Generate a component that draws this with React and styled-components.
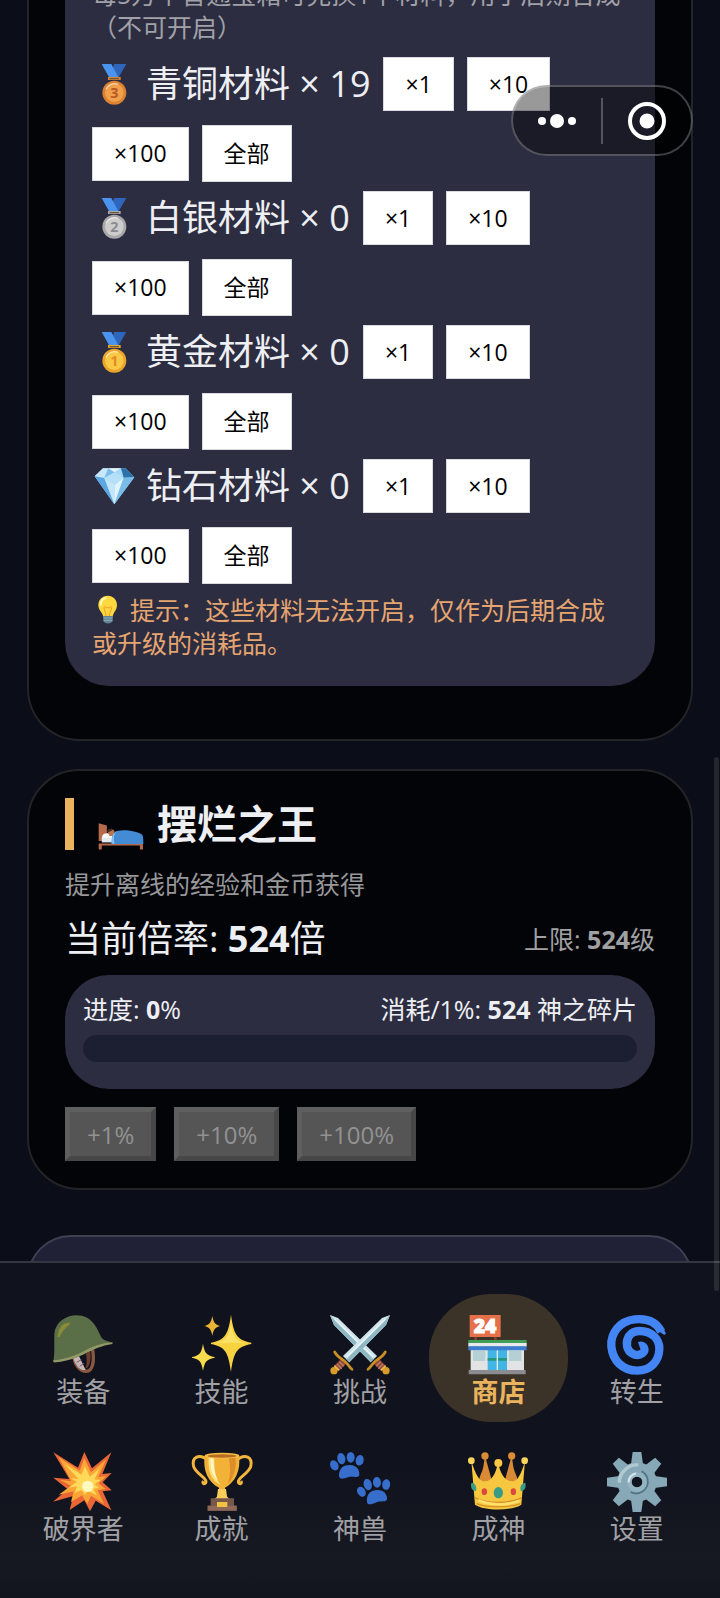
import styled, { createGlobalStyle, css } from "styled-components";

const GlobalStyle = createGlobalStyle`
  * {
    box-sizing: border-box;
  }
  body {
    margin: 0;
    background: #0b0d18;
    color: #eeeff3;
    font-family: "Open Sans", "Noto Sans CJK SC", sans-serif;
    text-spacing-trim: space-all;
  }
  button {
    font-family: inherit;
    cursor: pointer;
  }
`;

const Medal = ({ number, rim, face, ink }) => (
  <svg viewBox="0 0 135 135" aria-hidden="true">
    <path d="M66 6h37L80 46H56z" fill="#2f66bd" />
    <path d="M29 6h29l22 41H52z" fill="#4a93ee" />
    <path d="M48 45h38v9H48z" fill={rim} />
    <path d="M53 48h28v4H53z" fill="#6d5a3c" />
    <circle cx="67" cy="92" r="36" fill={rim} />
    <circle cx="67" cy="92" r="28" fill={face} />
    <path d="M42 82a28 28 0 0 1 36-15" fill="none" stroke="#fff" strokeOpacity=".6" strokeWidth="4" />
    <text x="67" y="107" fill={ink} fontSize="43" fontWeight="700" textAnchor="middle">
      {number}
    </text>
  </svg>
);

const Gem = () => (
  <svg viewBox="0 0 135 135" aria-hidden="true">
    <path d="M33 13h68l26 27-60 81L8 37z" fill="#9dd2f3" />
    <path d="M33 13 8 37l29 5 12-29z" fill="#c7e7fa" />
    <path d="M49 13 37 42l31-17z" fill="#7dbdec" />
    <path d="M49 13h38L68 25z" fill="#e4f5fd" />
    <path d="m87 13 8 28-27-16z" fill="#a8daf5" />
    <path d="M87 13h14l26 27-32 1z" fill="#2d71a8" />
    <path d="m68 25 27 16-26 21-32-20z" fill="#b5e1f8" />
    <path d="m8 37 29 5 30 79z" fill="#5ba7e2" />
    <path d="m37 42 32 20-2 59z" fill="#c3e6f9" />
    <path d="m95 41-26 21-2 59z" fill="#e1f3fc" />
    <path d="m127 40-32 1-28 80z" fill="#79bcea" />
  </svg>
);

const Bulb = () => (
  <svg viewBox="0 0 93 93" aria-hidden="true">
    <path d="M47 5c17 0 28 13 28 28 0 16-12 23-13 35H34C32 55 19 49 19 33 19 18 30 5 47 5z" fill="#fdd93f" />
    <path d="M26 32c1-10 7-18 15-20" fill="none" stroke="#fff6b8" strokeWidth="6" strokeLinecap="round" />
    <path d="M42 66c0-12-7-18-6-26 4-6 8 6 11 0 3 6 8-6 12 0 1 8-7 14-7 26" fill="none" stroke="#f49a22" strokeWidth="3" />
    <path d="M34 66h28v15c-3 10-25 10-28 0z" fill="#5f8495" />
    <path d="M34 72h28M35 79h26" stroke="#a9c3cd" strokeWidth="2" />
  </svg>
);

const Bed = () => (
  <svg viewBox="0 0 135 80" aria-hidden="true">
    <path d="M2 1 26 7v46H2z" fill="#b86b4b" />
    <path d="M2 60h130v18h-9V66H11v12H2z" fill="#b5694a" />
    <path d="M11 41h60v16H11z" fill="#dfeaf1" />
    <path d="M12 40c2-12 20-12 28-5l4 9H13z" fill="#f7fafb" />
    <path d="M28 26c-2-9 16-12 20-2l-2 14H34z" fill="#bb7650" />
    <path d="M27 24c3-10 18-10 20-3-7-1-8 5-18 6z" fill="#3f2a20" />
    <path d="M54 24c24-7 60 1 74 9 5 3 5 16 5 29H40c0-16 4-34 14-38z" fill="#438bd5" />
    <path d="M56 24c-9 5-11 19-7 37h-9c-2-18 4-34 16-37z" fill="#83bdf0" />
  </svg>
);

const Helmet = () => (
  <svg viewBox="0 0 180 180" aria-hidden="true">
    <path d="M63 125c1 22 16 44 37 44 20 0 24-32 19-65" fill="none" stroke="#8a5740" strokeWidth="10" />
    <path d="M99 117c4 23 2 38-3 45 14-3 20-30 15-55z" fill="#6c3d2d" />
    <path d="m60 122 15-5 23 48c-17 3-34-15-38-43z" fill="#c6b4b7" />
    <path d="m65 127 16-6m-10 21 14-8m-5 20 13-9" stroke="#765f64" strokeWidth="3" />
    <path d="M1 140C6 111 3 91 4 55 8 23 37 1 71 1c45 0 60 36 73 64 6 11 18 13 35 17-56 8-75 45-178 58z" fill="#5a6e47" />
    <path d="M1 136c89-8 98-48 178-54l-1 5C111 97 91 133 9 142c-8 1-9-2-8-6z" fill="#929767" />
    <path d="M17 63c2-21 13-35 30-37-16 13-24 22-30 37z" fill="#8b8b36" stroke="#8b8b36" strokeWidth="7" strokeLinejoin="round" />
  </svg>
);

const Sparkles = () => (
  <svg viewBox="0 0 180 180" aria-hidden="true">
    <path d="M117-1c8 58 17 76 61 84v4c-44 8-53 25-61 84-8-59-17-76-60-84v-4c43-8 52-26 60-84z" fill="#f7d340" />
    <path d="M117 24c4 41 14 54 44 61-29-2-54-2-88 0 28-7 40-20 44-61z" fill="#fceb83" fillOpacity=".6" />
    <path d="M61 3c4 20 8 26 24 30-16 4-20 10-24 29-4-19-8-25-24-29 16-4 20-10 24-30z" fill="#eab334" />
    <path d="M33 86c5 28 10 35 35 40v2c-25 5-30 12-35 39-5-27-9-34-33-39v-2c24-5 28-12 33-40z" fill="#f8da4d" />
  </svg>
);

const Sword = () => (
  <g>
    <path d="m0 0 24 9 117 114-19 19L12 30z" fill="#cfe4ea" />
    <path d="m0 0 12 30 110 112 9-9L18 20z" fill="#8fb6c3" />
    <path d="m14 12 116 114" stroke="#e9f5f8" strokeWidth="4" />
    <path d="m136 136 24 24" stroke="#8e4a39" strokeWidth="21" />
    <path d="m138 154 14-14m-7 21 14-14" stroke="#c27c62" strokeWidth="4" />
    <path d="M114 163c10-8 14-20 25-27s20-12 27-25" fill="none" stroke="#c98e25" strokeWidth="8" strokeLinecap="round" />
    <circle cx="168" cy="167" r="11" fill="#d79c2b" />
    <path d="m153 166 14-14" stroke="#e8b64c" strokeWidth="6" />
  </g>
);

const Swords = () => (
  <svg viewBox="0 0 180 180" aria-hidden="true">
    <Sword />
    <g transform="matrix(-1 0 0 1 180 0)">
      <Sword />
    </g>
  </svg>
);

const Store = () => (
  <svg viewBox="0 0 180 180" aria-hidden="true">
    <path d="M19 64h8v14h-8zM78 64h8v14h-8z" fill="#8c3d2b" />
    <path d="M5 0h93v66H5z" fill="#e5714a" />
    <text x="51" y="55" fill="#fff" stroke="#fff" strokeWidth="3" fontSize="58" fontWeight="800" textAnchor="middle">
      24
    </text>
    <path d="M8 100h160v67H8z" fill="#e2e3e5" />
    <path d="M15 107h37v31H15zm108 0h37v31h-37z" fill="#b4d0d4" />
    <path d="M59 104h58v62H59z" fill="#42b5e5" />
    <path d="M88 104v62" stroke="#e1eff3" strokeWidth="4" />
    <path d="M59 129h26v8H59zm31 0h27v8H90z" fill="#26967d" />
    <path d="M1 75h175v10H1z" fill="#419e56" />
    <path d="M1 84h175v11H1z" fill="#e8e9ea" />
    <path d="M1 94h175v12H1z" fill="#3b7ed0" />
    <path d="M2 165h171v13H2z" fill="#8b8c8f" />
  </svg>
);

const Cyclone = () => (
  <svg viewBox="0 0 180 180" aria-hidden="true">
    <path
      d="M163 50C147 18 120 9 83 13 39 18 10 53 13 94c4 43 34 73 78 73 39-1 65-27 66-65 1-32-25-54-59-54-31 0-41 24-38 45 4 24 32 33 46 22 12-10 5-27-9-22"
      fill="none"
      stroke="#4385f4"
      strokeWidth="25"
    />
    <path d="M140 20c18 8 32 21 36 34 1 6-5 6-9 3l-16-12z" fill="#4385f4" />
  </svg>
);

const Burst = () => (
  <svg viewBox="0 0 180 180" aria-hidden="true">
    <path
      d="m1 1 74 46L94 0l23 49 58-48-27 65 28-3-27 28 27 24-27 3 26 57-47-29-17 32-17-33-44 29 11-42-61 17 44-37L1 77l48 4z"
      fill="#e96636"
    />
    <path d="m17 16 63 40 14-38 20 43 46-39-24 53 24-3-23 22 21 17-24 4 19 41-39-25-11 24-16-25-33 20 8-32-45 10 37-27-33-18 34 5z" fill="#fba536" />
    <path d="m36 37 50 31 9-26 16 32 29-25-15 33 18 2-19 13 15 11-18 2 10 20-27-14-8 13-11-15-20 9 7-20-26 4 26-17-19-12 24 4z" fill="#ffda58" />
    <circle cx="104" cy="103" r="17" fill="#fff8bf" />
  </svg>
);

const Trophy = () => (
  <svg viewBox="0 0 180 180" aria-hidden="true">
    <path d="M49 25C21 3-2 15 5 44c6 20 39 34 37 46-2 10-13 4-8-3M132 25c28-22 51-10 44 19-6 20-39 34-37 46 2 10 13 4 8-3" fill="none" stroke="#f3b63d" strokeWidth="9" />
    <path d="M38 11h103c6 46-12 79-42 96v38H81v-38C49 90 32 58 38 11z" fill="#f2b238" />
    <path d="M50 17h17c-1 38 5 65 19 82-28-14-39-42-36-82z" fill="#ffe27b" />
    <path d="M56 18h8c0 27 4 51 14 67-18-13-24-36-22-67z" fill="#fff6c7" />
    <path d="M110 17h21c3 34-6 61-24 78 9-20 9-51 3-78z" fill="#dd8d29" />
    <ellipse cx="90" cy="11" rx="52" ry="9" fill="#f5be45" />
    <ellipse cx="90" cy="12" rx="43" ry="5" fill="#b86d24" />
    <path d="M78 111h24l3 22c3 7 10 7 10 12H65c0-6 9-6 10-12z" fill="#f8cd59" />
    <path d="M56 139h70v22h8v15H47v-15h9z" fill="#77564c" />
    <path d="M47 161h87v15H47z" fill="#8e6858" />
    <path d="M75 150h31v15H75z" fill="#efc344" />
  </svg>
);

const Paw = () => (
  <g>
    <ellipse cx="13" cy="40" rx="12" ry="16" transform="rotate(-27 13 40)" />
    <ellipse cx="34" cy="20" rx="12" ry="17" transform="rotate(-12 34 20)" />
    <ellipse cx="62" cy="16" rx="12" ry="16" />
    <ellipse cx="89" cy="25" rx="12" ry="16" transform="rotate(12 89 25)" />
    <path d="M27 68c2-21 15-30 34-29 19 1 28 14 27 29-2 12-20 3-34 8-15 5-28 8-27-8z" />
  </g>
);

const Paws = () => (
  <svg viewBox="0 0 180 180" fill="#376ecb" aria-hidden="true">
    <Paw />
    <g transform="translate(81 76) rotate(-5 50 40)">
      <Paw />
    </g>
  </svg>
);

const Crown = () => (
  <svg viewBox="0 0 180 180" aria-hidden="true">
    <path d="m51 11 21 77-37 5c-6-14 8-31 11-49zM131 11l-21 77 37 5c6-14-8-31-11-49z" fill="#d98a34" />
    <circle cx="51" cy="12" r="11" fill="#da8d34" />
    <circle cx="131" cy="12" r="11" fill="#da8d34" />
    <path d="M10 27c13 41 24 63 41 61 21-2 32-22 39-56 8 34 20 54 41 56 17 2 28-20 40-61l-11 131c-28 19-112 19-139 0z" fill="#f7c83f" />
    <circle cx="10" cy="26" r="10" fill="#fbd45b" />
    <circle cx="91" cy="33" r="12" fill="#f8c846" />
    <circle cx="170" cy="26" r="10" fill="#fbd45b" />
    <path d="M20 137c38 19 104 19 142 0M26 155c33 13 96 13 131 0" fill="none" stroke="#d69129" strokeWidth="4" />
    <path d="M31 145c37 15 83 16 123 1" fill="none" stroke="#ffe06d" strokeWidth="8" />
    <ellipse cx="91" cy="122" rx="14" ry="17" fill="#389c87" />
    <ellipse cx="49" cy="119" rx="8" ry="10" fill="#db493e" />
    <ellipse cx="136" cy="119" rx="8" ry="10" fill="#db493e" />
    <path d="M10 93c11 0 17 9 14 24-13-1-17-10-14-24zm162 0c-11 0-17 9-14 24 13-1 17-10 14-24z" fill="#389c87" />
  </svg>
);

const teeth = [0, 45, 90, 135, 180, 225, 270, 315];

const Gear = () => (
  <svg viewBox="0 0 180 180" aria-hidden="true">
    {teeth.map((angle) => (
      <path key={angle} d="M77 0h26l5 37H72z" fill="#86a8b7" transform={`rotate(${angle} 90 90)`} />
    ))}
    <path d="M90 31a59 59 0 1 0 .1 0zM90 74a16 16 0 1 1-.1 0z" fill="#86a8b7" fillRule="evenodd" />
    <path d="M37 92a53 53 0 0 1 57-53" fill="none" stroke="#b0c9d2" strokeWidth="10" />
    <path d="M104 58a35 35 0 0 1-33 62" fill="none" stroke="#527480" strokeWidth="5" />
    <circle cx="90" cy="90" r="23" fill="none" stroke="#94b4c1" strokeWidth="13" />
    <path d="M65 91a26 26 0 0 1 22-27" fill="none" stroke="#d3e2e7" strokeWidth="7" />
  </svg>
);

const materials = [
  { name: "青铜材料", count: 19, icon: <Medal number="3" rim="#dc8132" face="#f1a04b" ink="#b85824" /> },
  { name: "白银材料", count: 0, icon: <Medal number="2" rim="#a9a9aa" face="#cdcdce" ink="#8b8b8e" /> },
  { name: "黄金材料", count: 0, icon: <Medal number="1" rim="#eaa52c" face="#fac842" ink="#e28a2c" /> },
  { name: "钻石材料", count: 0, icon: <Gem /> },
];

const boosts = ["+1%", "+10%", "+100%"];

const menuList = [
  { item: "装备", icon: <Helmet /> },
  { item: "技能", icon: <Sparkles /> },
  { item: "挑战", icon: <Swords /> },
  { item: "商店", icon: <Store />, active: true },
  { item: "转生", icon: <Cyclone /> },
  { item: "破界者", icon: <Burst /> },
  { item: "成就", icon: <Trophy /> },
  { item: "神兽", icon: <Paws /> },
  { item: "成神", icon: <Crown /> },
  { item: "设置", icon: <Gear /> },
];

const App = () => {
  const progress = 0;

  return (
    <Screen>
      <GlobalStyle />
      <Content>
        <Card $continued>
          <MaterialPanel>
            <Description>
              每5万个普通宝箱可兑换1个材料，用于后期合成（不可开启）
            </Description>
            <MaterialList>
              {materials.map((material) => (
                <MaterialRow key={material.name}>
                  <MaterialName>
                    <MaterialIcon>{material.icon}</MaterialIcon>
                    {material.name} × {material.count}
                  </MaterialName>
                  <AmountButton>×1</AmountButton>
                  <AmountButton>×10</AmountButton>
                  <AmountButton>×100</AmountButton>
                  <AmountButton $tall>全部</AmountButton>
                </MaterialRow>
              ))}
            </MaterialList>
            <Tip>
              <TipIcon>
                <Bulb />
              </TipIcon>
              提示：这些材料无法开启，仅作为后期合成或升级的消耗品。
            </Tip>
          </MaterialPanel>
        </Card>

        <Card>
          <Title>
            <TitleIcon>
              <Bed />
            </TitleIcon>
            摆烂之王
          </Title>
          <Subtitle>提升离线的经验和金币获得</Subtitle>
          <RateRow>
            <Rate>
              当前倍率: <strong>524</strong>倍
            </Rate>
            <Limit>
              上限: <strong>524</strong>级
            </Limit>
          </RateRow>
          <ProgressPanel>
            <ProgressText>
              <span>
                进度: <strong>{progress}</strong>%
              </span>
              <span>
                消耗/1%: <strong>524</strong> 神之碎片
              </span>
            </ProgressText>
            <Track>
              <Fill style={{ width: `${progress}%` }} />
            </Track>
          </ProgressPanel>
          <BoostRow>
            {boosts.map((boost) => (
              <BoostButton key={boost} disabled>
                {boost}
              </BoostButton>
            ))}
          </BoostRow>
        </Card>

        <NextCard />
      </Content>

      <Nav>
        {menuList.map((menu) => (
          <NavItem key={menu.item} $active={menu.active}>
            <NavIcon>{menu.icon}</NavIcon>
            {menu.item}
          </NavItem>
        ))}
      </Nav>

      <Capsule>
        <CapsuleButton aria-label="更多">
          <svg width="40" height="40" viewBox="0 0 40 40" fill="#fff">
            <circle cx="5" cy="20" r="4" />
            <circle cx="20" cy="20" r="7" />
            <circle cx="35" cy="20" r="4" />
          </svg>
        </CapsuleButton>
        <Divider />
        <CapsuleButton aria-label="关闭">
          <svg width="40" height="40" viewBox="0 0 40 40">
            <circle cx="20" cy="20" r="17" fill="none" stroke="#fff" strokeWidth="4" />
            <circle cx="20" cy="20" r="7.5" fill="#fff" />
          </svg>
        </CapsuleButton>
      </Capsule>
      <ScrollThumb />
    </Screen>
  );
};
export default App;

const Screen = styled.div`
  position: relative;
  height: 100vh;
  display: flex;
  flex-direction: column;
  overflow: hidden;
`;

const Content = styled.main`
  flex: 1;
  min-height: 0;
  padding: 0 27px;
  overflow: hidden;
`;

const Card = styled.section`
  margin-bottom: 28px;
  padding: 27px 36px;
  border: 2px solid #232428;
  border-radius: 52px;
  background: #030408;
  ${(props) =>
    props.$continued &&
    css`
      margin-top: -49px;
      padding: 0 36px 53px;
      border-top: 0;
      border-radius: 0 0 52px 52px;
    `}
`;

const NextCard = styled.section`
  height: 120px;
  margin-top: 45px;
  border: 2px solid #3f4150;
  border-radius: 44px;
  background: #202136;
`;

const MaterialPanel = styled.div`
  padding: 27px 27px 26px;
  border-radius: 0 0 44px 44px;
  background: #2c2d41;
`;

const Description = styled.p`
  margin: 0 0 13px;
  color: #a1a1a7;
  font-size: 25px;
  line-height: 33px;
`;

const MaterialList = styled.div`
  display: flex;
  flex-direction: column;
  gap: 9px;
`;

const MaterialRow = styled.div`
  display: flex;
  flex-wrap: wrap;
  align-items: center;
  gap: 14px 13px;
`;

const MaterialName = styled.span`
  display: flex;
  align-items: center;
  font-size: 36px;
  line-height: 54px;
`;

const MaterialIcon = styled.span`
  width: 45px;
  height: 45px;
  margin-right: 9px;
  svg {
    display: block;
  }
`;

const AmountButton = styled.button`
  height: ${(props) => (props.$tall ? "57px" : "54px")};
  padding: 0 21px;
  border: 1px solid #d9d9de;
  background: #ffffff;
  color: #000000;
  font-size: 23px;
  line-height: 33px;
`;

const Tip = styled.p`
  margin: 10px 0 0;
  color: #e6a570;
  font-size: 25px;
  line-height: 33px;
`;

const TipIcon = styled.span`
  display: inline-block;
  width: 31px;
  height: 31px;
  margin-right: 7px;
  vertical-align: top;
  svg {
    display: block;
  }
`;

const Title = styled.h2`
  display: flex;
  align-items: flex-end;
  height: 52px;
  margin: 0;
  padding-left: 24px;
  border-left: 9px solid #eab45f;
  font-size: 40px;
  font-weight: 700;
  line-height: 52px;
`;

const TitleIcon = styled.span`
  width: 46px;
  margin-right: 13px;
  svg {
    display: block;
  }
`;

const Subtitle = styled.p`
  margin: 18px 0 12px;
  color: #98989b;
  font-size: 25px;
  line-height: 33px;
`;

const RateRow = styled.div`
  display: flex;
  align-items: center;
  justify-content: space-between;
  margin-bottom: 10px;
`;

const Rate = styled.span`
  font-size: 36px;
  line-height: 52px;
`;

const Limit = styled.span`
  color: #a1a1a4;
  font-size: 25px;
  line-height: 33px;
`;

const ProgressPanel = styled.div`
  padding: 18px 18px 27px;
  border-radius: 44px;
  background: #2c2d41;
`;

const ProgressText = styled.div`
  display: flex;
  justify-content: space-between;
  margin-bottom: 9px;
  font-size: 25px;
  line-height: 33px;
`;

const Track = styled.div`
  height: 27px;
  border-radius: 14px;
  background: #1c1f31;
  overflow: hidden;
`;

const Fill = styled.div`
  height: 100%;
  background: #eab45f;
`;

const BoostRow = styled.div`
  display: flex;
  gap: 18px;
  margin-top: 18px;
`;

const BoostButton = styled.button`
  height: 54px;
  padding: 0 17px;
  border: 5px solid;
  border-color: #5f5f5f #474747 #474747 #5f5f5f;
  background: #555555;
  color: #929292;
  font-size: 24px;
  line-height: 33px;
`;

const Nav = styled.nav`
  display: grid;
  grid-template-columns: repeat(5, 1fr);
  gap: 9px 0;
  padding: 31px 14px 39px;
  border-top: 2px solid #343641;
  background: linear-gradient(#10121d 60%, #161922 88%, #12141e);
`;

const NavItem = styled.button`
  display: flex;
  flex-direction: column;
  align-items: center;
  height: 128px;
  padding: 21px 0 0;
  border: 0;
  border-radius: 62px;
  background: ${(props) => (props.$active ? "#3b3228" : "transparent")};
  color: ${(props) => (props.$active ? "#eab45f" : "#a1a1a5")};
  font-size: 27px;
  font-weight: ${(props) => (props.$active ? 700 : 400)};
  line-height: 34px;
`;

const NavIcon = styled.span`
  width: 60px;
  height: 60px;
  svg {
    display: block;
    overflow: visible;
  }
`;

const Capsule = styled.div`
  position: absolute;
  top: 85px;
  right: 27px;
  display: flex;
  align-items: center;
  width: 182px;
  height: 71px;
  border: 2px solid rgba(255, 255, 255, 0.25);
  border-radius: 36px;
  background: rgba(0, 0, 0, 0.4);
`;

const CapsuleButton = styled.button`
  flex: 1;
  display: flex;
  align-items: center;
  justify-content: center;
  padding: 0;
  border: 0;
  background: transparent;
`;

const Divider = styled.div`
  width: 2px;
  height: 46px;
  background: rgba(255, 255, 255, 0.25);
`;

const ScrollThumb = styled.div`
  position: absolute;
  top: 757px;
  right: 1px;
  width: 5px;
  height: 534px;
  border-radius: 3px;
  background: rgba(255, 255, 255, 0.1);
`;
